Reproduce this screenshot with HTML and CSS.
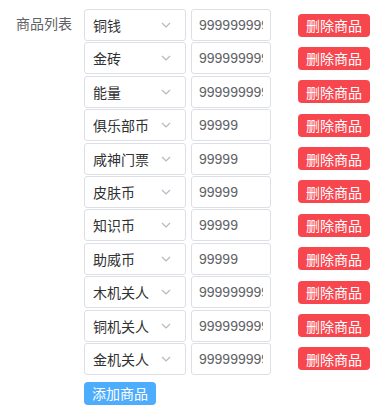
FILE: index.html
```html
<!DOCTYPE html>
<html lang="zh-CN">
<head>
  <meta charset="UTF-8" />
  <meta name="viewport" content="width=device-width, initial-scale=1.0"/>
  <title>商品列表</title>
  <link rel="stylesheet" href="styles.css">
</head>
<body>
  <div class="form-item">
    <label class="form-label">商品列表</label>
    <div class="form-content">
      <ul id="list"></ul>
      <button class="add-btn" onclick="addGoods()">添加商品</button>
    </div>
  </div>

  <script>
    const list = document.getElementById('list');

    let goods = [
      { name: '铜钱', num: '9999999999' },
      { name: '金砖', num: '9999999999' },
      { name: '能量', num: '9999999999' },
      { name: '俱乐部币', num: '99999' },
      { name: '咸神门票', num: '99999' },
      { name: '皮肤币', num: '99999' },
      { name: '知识币', num: '99999' },
      { name: '助威币', num: '99999' },
      { name: '木机关人', num: '9999999999' },
      { name: '铜机关人', num: '9999999999' },
      { name: '金机关人', num: '9999999999' }
    ];

    function addGoods() {
      goods.push({ name: '铜钱', num: '' });
      render();
    }

    function removeGoods(i) {
      goods.splice(i, 1);
      render();
    }

    function render() {
      list.innerHTML = '';
      goods.forEach((item, i) => {
        const li = document.createElement('li');
        li.innerHTML = `
          <div class="select">
            <span>${item.name}</span>
            <svg class="arrow" width="10" height="6" viewBox="0 0 10 6">
              <path d="M1 1 L5 5 L9 1" fill="none" stroke="#b4b8c0" stroke-width="1.2"/>
            </svg>
          </div>
          <input class="num" type="text" value="${item.num}">
          <button class="del-btn" onclick="removeGoods(${i})">删除商品</button>
        `;
        list.appendChild(li);
      });
    }

    render();
  </script>
</body>
</html>
```

FILE: styles.css
```css
* {
  box-sizing: border-box;
  margin: 0;
  padding: 0;
  font-family: "Liberation Sans", "Noto Sans CJK SC", sans-serif;
}

body {
  background: #fff;
  padding-top: 9px;
}

.form-item {
  display: flex;
}

.form-label {
  width: 84px;
  padding-left: 16px;
  line-height: 30px;
  font-size: 14px;
  color: #606266;
}

ul {
  list-style: none;
  display: flex;
  flex-direction: column;
  gap: 1.4px;
}

ul li {
  display: flex;
  align-items: center;
  height: 32px;
}

.select {
  width: 102px;
  height: 32px;
  border: 1px solid #dcdfe6;
  border-radius: 3px;
  display: flex;
  align-items: center;
  justify-content: space-between;
  padding: 0 14px 0 8px;
  font-size: 14px;
  color: #303133;
}

.num {
  width: 80px;
  height: 32px;
  margin-left: 5px;
  border: 1px solid #dcdfe6;
  border-radius: 3px;
  padding: 0 7px;
  font-size: 14px;
  color: #606266;
  outline: none;
}

.del-btn {
  margin-left: 27px;
  width: 72px;
  height: 23px;
  border: none;
  border-radius: 4px;
  background: #f8464f;
  color: #fff;
  font-size: 14px;
  cursor: pointer;
}

.add-btn {
  margin-top: 7px;
  width: 72px;
  height: 23px;
  border: none;
  border-radius: 4px;
  background: #4eacfc;
  color: #fff;
  font-size: 14px;
  cursor: pointer;
}
```
